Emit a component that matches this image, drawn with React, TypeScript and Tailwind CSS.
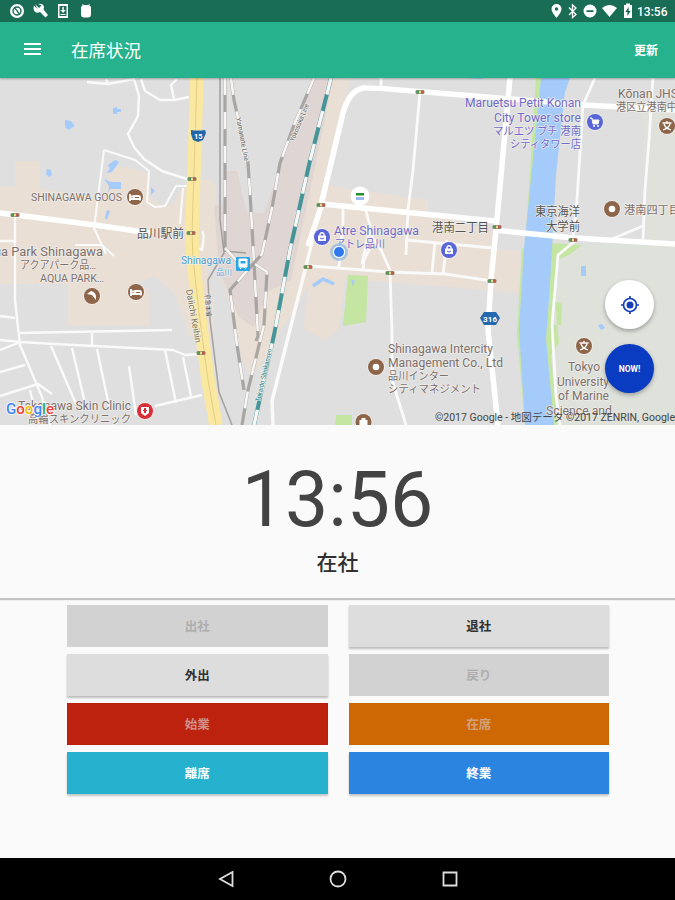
import React from "react";

type LabelProps = {
  x: number;
  y: number;
  w?: number;
  size?: number;
  fill?: string;
  weight?: number;
  transform?: string;
  children: React.ReactNode;
};

function Label({ x, y, w, size = 12, fill = "#7d706b", weight = 400, transform, children }: LabelProps) {
  return (
    <text
      x={x}
      y={y}
      textLength={w}
      lengthAdjust="spacingAndGlyphs"
      fontSize={size}
      fontWeight={weight}
      fill={fill}
      stroke="#f4f2f0"
      strokeOpacity={0.75}
      strokeWidth={1.6}
      strokeLinejoin="round"
      paintOrder="stroke"
      transform={transform}
    >
      {children}
    </text>
  );
}

function Signal({ x, y }: { x: number; y: number }) {
  return (
    <g transform={`translate(${x} ${y})`}>
      <rect x="-4.5" y="-2" width="9" height="4" rx="1.5" fill="#8b8a75" />
      <rect x="-3.5" y="-1.3" width="2.5" height="2.6" fill="#4b9b57" />
      <rect x="-1" y="-1.3" width="2" height="2.6" fill="#e9d98b" />
      <rect x="1.2" y="-1.3" width="2.5" height="2.6" fill="#c4564c" />
    </g>
  );
}

function Pin({ x, y, fill = "#8d6549", children }: { x: number; y: number; fill?: string; children?: React.ReactNode }) {
  return (
    <g transform={`translate(${x} ${y})`}>
      <circle r="8.8" fill="#f3f0ee" />
      <circle r="8" fill={fill} />
      {children}
    </g>
  );
}

function Bed() {
  return <path d="M-5-3v7M-5 2H5M5 3.5V0q0-1-1.5-1H-1v3M-4-.5h2" fill="none" stroke="#fff" strokeWidth="1.8" />;
}

function Bag() {
  return (
    <g>
      <path d="M-4-1.5h8V4h-8z" fill="#fff" />
      <path d="M-2-1v-2q2-2.5 4 0v2" fill="none" stroke="#fff" strokeWidth="1.3" />
      <path d="M-2 1q2 2 4 0" fill="none" stroke="#5765d9" />
    </g>
  );
}

function School() {
  return (
    <g fill="none" stroke="#fff" strokeWidth="1.3">
      <path d="M-4.500-3h9M0-5v2M-3-2q1 4 7 6M3-2q-1 4-7 6" />
    </g>
  );
}

function Rail({ d, w = 3.2, color = "#9a9795" }: { d: string; w?: number; color?: string }) {
  return (
    <g fill="none">
      <path d={d} stroke={color} strokeWidth={w} strokeOpacity={0.8} />
      <path d={d} stroke="#f7f6f5" strokeWidth={w - 0.6} strokeDasharray="17 17" />
    </g>
  );
}

function MapView() {
  return (
    <svg
      className="block h-[347px] w-full shrink-0"
      viewBox="0 78 675 347"
      fontFamily="Roboto, 'Noto Sans CJK JP', sans-serif"
    >
      <rect y="78" width="675" height="347" fill="#dfdfdf" />

      {/* land areas */}
      <g fill="#e9dfd4">
        <path d="M0 187l15-1V161h25v27l62 12 8-32 18-1 20 7v22l14 10 11-2 12-20h31v79l-8 9 6 35v30l-25-1-14-42-20-18-18 8 12 6v36H68V284H0z" />
        <path d="M187 180h26v35h15v-45h12v43h42l5-53h13l22-81h28L324 185l104 15v13l65 18v18l27 2v42l-12-1-83-7-80-6-6 50-15 12-20-13 4-42-42 70-15 22-8-17-15-64-16-45z" />
      </g>
      <path d="M283 159l31-80h19l-26 126-16 75-22 11-16 36-14-10-20-47-5-65 11-1v-33h12l10 42h17z" fill="#dfd5d2" />
      <path d="M550 250l8-5h117v180H562l-8-40z" fill="#dfe1db" />
      <path d="M642 108h33v132h-30z" fill="#e0e1da" />
      <g fill="#c5e5a3">
        <path d="M348 275l20 1-2 46-23 4zM336 415h16v10h-17z" />
        <path d="M536 78h6l-4 70-5 85h-7zM522 248h4l-4 85 6 92h-3l-8-92zM550 243l32 2-13 10-12 5-4 65h8l1-22-7-1 4 41-8 12 6 70h-10l-8-90z" />
      </g>

      {/* canal and ponds */}
      <g fill="#a4cbfa">
        <path d="M541 78h29l-5 14-9 83-4 74-3 50-3 40 8 86h-29l-6-96 5-80 10-100z" />
        <path d="M65 120l6 1 4 5-7 4-3-3zM113 108l4-1v2h4v3h-4v2h-4zM47 169l4 1 1 5-3 2-3-3zM108 165l7-5 4 2-7 10-5 1 3-5zM104 179l7 3h10v7h-11l-2 4 1-7zM107 210l3 1-3 9-2-2zM151 187l4 4-4 4zM581 266h5v10h-5zM598 325l4-1 3 4-4 2zM450 77h38l-7 2zM351 279l4 2-2 5z" />
      </g>
      <path d="M313 286l10-7 11 5" fill="none" stroke="#a4cbfa" strokeWidth="3.5" />

      {/* minor streets */}
      <g fill="none" stroke="#fafafa" strokeLinejoin="round">
        <path
          strokeWidth="2.4"
          d="M87 82l21 2 26-5 5 17-1 20-10 18 6 13 10 12 18 12 25 8M106 79l2 5M141 79l4 12 15 9 14 0 15-3M177 79l-6 6 3 14M15 215v85l5 45 22 52 8 28M0 340l20 2 35 2 118 6 12 5 16-1M18 333l154-3M0 316l15 2M0 350l18-7M0 372l25-7M0 396l38-12 14 10M30 390l6 25M51 346l25 58M72 348l13 55M97 349l12 57M129 366l7 49M165 350l11 53M183 357l8 39M155 406l47-11M92 333v13M0 241h15M202 232q3 1 0 18l-8-4"
        />
        <path strokeWidth="2" d="M104 150l31 10 14 11-2 31 8 5 10-1 11-20 11 0M104 150l-10 78 12 26M183 188l-3 36M75 245h27l12 11" />
        <path
          strokeWidth="2.8"
          d="M381 78v12M420 92l-7 78-5 40-2 45M310 266l80 6 55 2 47 7M343 209v16l-4 42M366 211l4 15-8 38M390 272l2 60 0 48 14 45M363 270l1-10 6-12M390 270l-9-20-16-24M406 240l87 8M447 240l-4 35M435 242l-3 30M595 78l-12 27-6 95-4 38M653 78l-4 62-4 50-2 50M643 226l-31 13M575 241l-17 14-6 70 4 70 4 30"
        />
        <path strokeWidth="3.5" d="M315 230l-9 36-34 135 1 24" />
      </g>

      {/* avenues */}
      <g fill="none" stroke="#fff" strokeLinejoin="round">
        <path strokeWidth="5.5" d="M0 213l95 12 55 8M321 205l22-92q6-22 20-25 5-1 87 6l135 11 90 5M308 246l14-42 173 17M494 230l80 8 101 6" />
        <path strokeWidth="5.500" d="M510 78l-14 152-5 50-3 50 10 95" />
      </g>

      {/* highway */}
      <path d="M197 78l-5 155 1 25 6 55 9 67 8 45" fill="none" stroke="#fae8a0" strokeWidth="13.5" />
      <path d="M197 78l-5 155 1 25 6 55 9 67 8 45" fill="none" stroke="#e4cc83" strokeWidth="1" />

      {/* railways */}
      <path d="M220 78v141l4 34-16 27 2 40 9 72 13 33M246 253l-22-2" fill="none" stroke="#a3a09e" strokeWidth="1.5" />
      <Rail d="M225 78v170l12 13" />
      <Rail d="M231 78l3 22 14 63 2 30 4 69 4 74-2 5" />
      <Rail d="M314 78l-20 47-14 38-8 45-10 46-32 36 7 55 7 45" />
      <Rail d="M255 264l12 8-3 53-16 65-6 35" />
      <Rail d="M331 78l-22 87-19 85-16 85-20 90" w={4} color="#1d858a" />

      <g fontSize="7">
        <Label x={236} y={118} size={7} w={44} fill="#696969" transform="rotate(79 236 118)">Yamanote Line</Label>
        <Label x={294} y={142} size={7} w={40} fill="#696969" transform="rotate(-68 294 142)">Yokosuka Line</Label>
        <Label x={260} y={402} size={7} w={54} fill="#368b90" transform="rotate(-77 260 402)">Tokaido Shinkansen</Label>
        <Label x={186} y={290} size={9} w={54} fill="#81765a" transform="rotate(80 186 290)">Daiichi Keihin</Label>
        <Label x={205} y={294} size={7} w={23} fill="#555" transform="rotate(87 205 294)">京急本線</Label>
      </g>

      <Signal x={192} y={179} />
      <Signal x={191} y={233} />
      <Signal x={15} y={215} />
      <Signal x={201} y={353} />
      <Signal x={321} y={205} />
      <Signal x={420} y={92} />
      <Signal x={308} y={267} />
      <Signal x={390} y={273} />
      <Signal x={497} y={227} />
      <Signal x={573} y={240} />
      <Signal x={492} y={281} />
      <path d="M191 130q6 1 14 0l1 3-3 7-5 2-5-2-2-6z" fill="#2466ad" />
      <text x="194" y="139" fontSize="7.5" fontWeight="700" fill="#fff">15</text>
      <path d="M484 312h12l4 6-4 7h-12l-4-7z" fill="#2469ad" />
      <text x="483" y="322" fontSize="8" fontWeight="700" fill="#fff" textLength="14">316</text>

      {/* place names */}
      <Label x={31} y={201} w={91} size={11}>SHINAGAWA GOOS</Label>
      <Label x={137} y={238} w={47} fill="#555">品川駅前</Label>
      <Label x={-6} y={256} w={109}>ua Park Shinagawa</Label>
      <Label x={20} y={269} w={76} size={11}>アクアパーク品…</Label>
      <Label x={40} y={282} w={64} size={11}>AQUA PARK…</Label>
      <Label x={181} y={264} w={50} size={10} fill="#4aa2d9">Shinagawa</Label>
      <Label x={216} y={275} w={16} size={8} fill="#4aa2d9">品川</Label>
      <Label x={334} y={235} w={85} fill="#716ac9">Atre Shinagawa</Label>
      <Label x={335} y={248} w={50} size={11} fill="#716ac9">アトレ品川</Label>
      <Label x={432} y={232} w={57} fill="#555">港南二丁目</Label>
      <Label x={465} y={107} w={116} fill="#716ac9">Maruetsu Petit Konan</Label>
      <Label x={494} y={122} w={87} fill="#716ac9">City Tower store</Label>
      <Label x={493} y={135} w={88} size={11} fill="#716ac9">マルエツ プチ 港南</Label>
      <Label x={510} y={148} w={71} size={11} fill="#716ac9">シティタワー店</Label>
      <Label x={535} y={216} w={45} fill="#555">東京海洋</Label>
      <Label x={546} y={231} w={34} fill="#555">大学前</Label>
      <Label x={618} y={98} w={60}>Kōnan JHS</Label>
      <Label x={616} y={111} w={61} size={11}>港区立港南中</Label>
      <Label x={624} y={214} w={56} size={11}>港南四丁目</Label>
      <Label x={388} y={353} w={105}>Shinagawa Intercity</Label>
      <Label x={388} y={367} w={115}>Management Co., Ltd</Label>
      <Label x={388} y={380} w={61} size={11}>品川インター</Label>
      <Label x={388} y={393} w={93} size={11}>シティマネジメント</Label>
      <Label x={568} y={371} w={32}>Tokyo</Label>
      <Label x={557} y={386} w={52}>University</Label>
      <Label x={558} y={400} w={51}>of Marine</Label>
      <Label x={546} y={415} w={66}>Science and</Label>
      <Label x={18} y={410} w={113}>Takanawa Skin Clinic</Label>
      <Label x={28} y={423} w={103} size={11}>高輪スキンクリニック</Label>

      <Pin x={135} y={197}><Bed /></Pin>
      <Pin x={136} y={292}><Bed /></Pin>
      <Pin x={92} y={296}><path d="M-5-2l4-3q6 1 5 9l-4-5z" fill="#fff" /></Pin>
      <Pin x={322} y={237} fill="#5765d9"><Bag /></Pin>
      <Pin x={449} y={250} fill="#5765d9"><Bag /></Pin>
      <Pin x={595} y={122} fill="#5765d9">
        <path d="M-5-4h2l1 6h5l1-4h-6" fill="#fff" stroke="#fff" />
        <circle cx="-1" cy="4" r="1" fill="#fff" />
        <circle cx="3" cy="4" r="1" fill="#fff" />
      </Pin>
      <Pin x={667} y={126}><School /></Pin>
      <Pin x={584} y={346}><School /></Pin>
      <Pin x={612} y={209}><circle r="3.3" fill="#fff" /></Pin>
      <Pin x={376} y={367}><circle r="3.3" fill="#fff" /></Pin>
      <Pin x={363.500} y={422}><path d="M-4-2h8v7h-8zM-2-4h4v2h-4z" fill="#fff" /></Pin>
      <Pin x={145} y={411} fill="#d82e35"><path d="M-4-4h8v6l-4 3-4-3z" fill="#fff" /><path d="M-1-3h2v5h-2zM-2-1h4v1h-4z" fill="#d82e35" /></Pin>
      <circle cx="360" cy="196" r="9.500" fill="#fff" />
      <path d="M356 193h8v2.500h-8z" fill="#21912e" />
      <path d="M356 197h8v3h-8z" fill="#9db9ed" />
      <rect x="236" y="257" width="14" height="14" rx="1" fill="#27a6e9" />
      <path d="M239 259h8v8h-8zM240 269l2-2M246 269l-2-2" fill="#fff" stroke="#fff" />
      <path d="M240.500 261h5v2.500h-5z" fill="#27a6e9" />
      <circle cx="339" cy="252" r="8.800" fill="#8fb7df" fillOpacity=".75" />
      <circle cx="339" cy="252" r="6.200" fill="#f2f6ff" />
      <circle cx="339" cy="252" r="5" fill="#3079eb" />

      <text x="6" y="414" fontSize="15" fontWeight="500" textLength="48" lengthAdjust="spacingAndGlyphs" stroke="#fff" strokeWidth="1.500" paintOrder="stroke">
        <tspan fill="#4285f4">G</tspan><tspan fill="#ea4335">o</tspan><tspan fill="#fbbc05">o</tspan><tspan fill="#4285f4">g</tspan><tspan fill="#34a853">l</tspan><tspan fill="#ea4335">e</tspan>
      </text>
      <text x="435" y="421" fontSize="10.500" fill="#444" textLength="240" lengthAdjust="spacingAndGlyphs">©2017 Google - 地図データ ©2017 ZENRIN, Google</text>
    </svg>
  );
}

function StatusIcons() {
  return (
    <div className="flex items-center">
      <svg className="h-[22px] w-[100px]" viewBox="0 0 100 22" fill="#fff">
        <circle cx="17" cy="11" r="7" />
        <circle cx="17" cy="11" r="4" fill="none" stroke="#196d55" strokeWidth="1.400" />
        <path d="M14 7.500l3.500 3.500M20 14.500L17 11" fill="none" stroke="#196d55" strokeWidth="1.200" />
        <path d="M35 4l4 4 2.500-2.500L38 4q5-1 6 3 0 1-.5 2.500L48 15l-2.500 2.500-5.500-5.500q-4 2-6-1.500-1-3 0-5l3.500 3.500" />
        <path fillRule="evenodd" d="M58 4h10v14H58zm1.500 2v10h7V6z" />
        <path d="M62.300 7h1.500v3h2L63 13l-2.700-3h2zM60.500 14h5v1h-5z" />
        <path d="M81 8q-.5-2 1.500-2L82 4l2 1h4l2-1-.5 2q2 0 1.500 2v6q0 3.500-3 3.500h-4q-3 0-3-3.500z" />
      </svg>
    </div>
  );
}

function PhoneStatus() {
  return (
    <div className="flex items-center pr-[6px]">
      <svg className="h-[22px] w-[88px]" viewBox="548 0 88 22" fill="#fff">
        <path fillRule="evenodd" d="M555.500 4a5 5 0 0 1 5 5q0 3-5 9-5-6-5-9a5 5 0 0 1 5-5zm0 3.300a1.700 1.700 0 1 0 0 3.400 1.700 1.700 0 0 0 0-3.400z" />
        <path d="M568 7.500l7 7-3.500 3V5l3.500 3-7 7" fill="none" stroke="#fff" strokeWidth="1.300" />
        <path fillRule="evenodd" d="M589 4.500a6.500 6.500 0 1 1 0 13 6.500 6.500 0 0 1 0-13zm-3.500 5.700v1.800h7v-1.800z" />
        <path d="M601 8q7.500-6 15 0l-7.500 9z" />
        <path fillRule="evenodd" d="M623 5h2V3.500h4V5h2v13h-8zm4.600 2l-3.200 5h2v4l3.300-5h-2z" />
      </svg>
      <span className="w-[32px] whitespace-nowrap pt-px text-[12px] font-medium leading-none text-white">13:56</span>
    </div>
  );
}

const actions = [
  { text: "出社", style: "bg-[#d2d2d2] text-[#adadad]" },
  { text: "退社", style: "bg-[#dddddd] text-[#303030] shadow-[0_2px_2px_rgba(0,0,0,0.25)]" },
  { text: "外出", style: "bg-[#dddddd] text-[#303030] shadow-[0_2px_2px_rgba(0,0,0,0.25)]" },
  { text: "戻り", style: "bg-[#d2d2d2] text-[#adadad]" },
  { text: "始業", style: "bg-[#bd220f] text-[#d0918a] shadow-[inset_0_0_1px_#971100]" },
  { text: "在席", style: "bg-[#cd6805] text-[#d2a17d] shadow-[inset_0_0_1px_#a85000]" },
  { text: "離席", style: "bg-[#26b1ce] text-white shadow-[0_2px_2px_rgba(0,0,0,0.22)]" },
  { text: "終業", style: "bg-[#2b84df] text-white shadow-[0_2px_2px_rgba(0,0,0,0.22)]" },
];

export default function App() {
  return (
    <div className="flex h-[900px] w-[675px] flex-col overflow-hidden bg-[#fafafa] font-[Roboto,'Noto_Sans_CJK_JP',sans-serif]">
      <div className="flex h-[22px] shrink-0 items-center justify-between bg-[#196d55]">
        <StatusIcons />
        <PhoneStatus />
      </div>
      <header className="z-10 flex h-[56px] shrink-0 items-center bg-[#26b28c] pl-[24px] pr-[17px] text-white shadow-[0_1px_2px_rgba(0,0,0,0.3)]">
        <div className="mb-[2px] flex w-[17px] flex-col gap-[3px]">
          <span className="h-[2px] bg-white" />
          <span className="h-[2px] bg-white" />
          <span className="h-[2px] bg-white" />
        </div>
        <h1 className="ml-[30px] pt-[3px] text-[17.5px] font-normal leading-none">在席状況</h1>
        <span className="ml-auto pt-[2px] text-[12px] font-bold leading-none">更新</span>
      </header>

      <div className="relative shrink-0">
        <MapView />
        <button className="absolute left-[605px] top-[202px] flex size-[49px] items-center justify-center rounded-full bg-white shadow-[0_2px_4px_rgba(0,0,0,0.3)]">
          <svg className="size-[20px]" viewBox="0 0 20 20" fill="none" stroke="#1540bd" strokeWidth="1.700">
            <circle cx="10" cy="10" r="6.500" />
            <path d="M10 1v3M10 16v3M1 10h3M16 10h3" />
            <circle cx="10" cy="10" r="3.500" fill="#1540bd" stroke="none" />
          </svg>
        </button>
        <button className="absolute left-[605px] top-[266px] flex size-[49px] items-center justify-center rounded-full bg-[#0a3cc2] pt-px text-[8.5px] font-bold text-white shadow-[0_2px_4px_rgba(0,0,0,0.3)]">
          NOW!
        </button>
      </div>

      <section className="flex h-[173px] shrink-0 flex-col items-center bg-[#fafafa] pt-[35px] shadow-[0_2px_1px_rgba(0,0,0,0.22)]">
        <div className="text-[77px] leading-[80px] text-[#434343]">13:56</div>
        <div className="mt-[12px] text-[21px] font-medium leading-[22px] text-[#303030]">在社</div>
      </section>

      <div className="grid grid-cols-2 gap-x-[21px] gap-y-[7px] pl-[67px] pr-[66px] pt-[7px]">
        {actions.map((a) => (
          <button
            key={a.text}
            className={`flex h-[42px] items-center justify-center pt-[2px] text-[12.5px] font-bold leading-none ${a.style}`}
          >
            {a.text}
          </button>
        ))}
      </div>

      <nav className="mt-auto flex h-[42px] shrink-0 items-center justify-center gap-[94px] bg-black">
        <svg className="size-[18px]" viewBox="0 0 18 18" fill="none" stroke="#dedede" strokeWidth="1.800">
          <path d="M15.500 2v14L3 9z" />
        </svg>
        <svg className="size-[18px]" viewBox="0 0 18 18" fill="none" stroke="#dedede" strokeWidth="1.800">
          <circle cx="9" cy="9" r="7.500" />
        </svg>
        <svg className="size-[18px]" viewBox="0 0 18 18" fill="none" stroke="#dedede" strokeWidth="1.800">
          <path d="M2.500 2.500h13v13h-13z" />
        </svg>
      </nav>
    </div>
  );
}
